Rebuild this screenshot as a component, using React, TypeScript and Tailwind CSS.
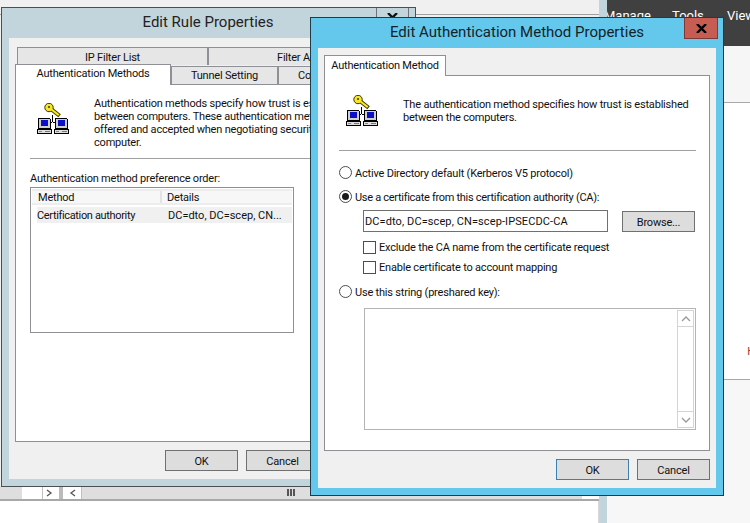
import React from 'react';

const KeyIcon: React.FC<{ className?: string }> = ({ className }) => (
  <svg className={className} width="32" height="32" viewBox="0 0 32 32">
    {/* connector */}
    <path d="M15 12h1v7h-1zM12 19h3v1h-3zM16 19h3v1h-3z" fill="#000" shapeRendering="crispEdges" />
    {/* key */}
    <path d="M14 6l7 5.5" stroke="#3a3400" strokeWidth="4" strokeLinecap="square" />
    <circle cx="12" cy="4.5" r="4.2" fill="#f7e628" stroke="#3a3400" strokeWidth="1" />
    <path d="M14 6l7 5.5" stroke="#f7e628" strokeWidth="2" strokeLinecap="square" />
    <path d="M10.5 3h2v2h-2z" fill="#6b6000" shapeRendering="crispEdges" />
    {[1, 18].map((x) => (
      <g key={x} transform={`translate(${x} 15)`} shapeRendering="crispEdges">
        <path d="M0 0h12v1h1v10h-13z" fill="#000" />
        <path d="M1 1h11v9h-11z" fill="#cfcfcf" />
        <path d="M3 2h7v6h-7z" fill="#0a10c8" />
        <path d="M-1 11h15v5h-15z" fill="#000" />
        <path d="M0 12h13v3h-13z" fill="#dedede" />
        <path d="M1 13h3v1h-3z" fill="#18c838" />
        <path d="M7 13h5v1h-5z" fill="#777" />
      </g>
    ))}
  </svg>
);

const Chevron: React.FC<{ d: string; color?: string }> = ({ d, color = '#9a9a9a' }) => (
  <svg width="10" height="8" viewBox="0 0 10 8" fill="none" stroke={color} strokeWidth="1.3">
    <path d={d} />
  </svg>
);

const Radio: React.FC<{ label: string; checked?: boolean; className?: string }> = ({ label, checked, className }) => (
  <div className={`flex items-center h-[13px] ${className ?? ''}`}>
    <span className="w-[13px] h-[13px] rounded-full border border-[#4d4d4d] bg-white flex items-center justify-center mr-[3px] shrink-0">
      {checked && <span className="w-[7px] h-[7px] rounded-full bg-[#1a1a1a]" />}
    </span>
    <span className="pt-[1px]">{label}</span>
  </div>
);

const Check: React.FC<{ label: string; className?: string }> = ({ label, className }) => (
  <div className={`flex items-center h-[13px] ml-[24px] ${className ?? ''}`}>
    <span className="w-[13px] h-[13px] border border-[#4d4d4d] bg-white mr-[3px] shrink-0" />
    <span>{label}</span>
  </div>
);

const Btn: React.FC<{ label: string; focused?: boolean }> = ({ label, focused }) => (
  <div
    className={`w-[73px] h-[21px] pt-[1px] flex items-center justify-center bg-[#dddddd] border text-[#111] ${
      focused ? 'border-[#3c7fb1]' : 'border-[#707070]'
    }`}
  >
    {label}
  </div>
);

const Tab: React.FC<{ label: string; className: string }> = ({ label, className }) => (
  <div className={`flex items-center whitespace-nowrap overflow-hidden bg-[#e6e6e6] border border-b-0 border-[#8f8f96] shrink-0 ${className}`}>
    {label}
  </div>
);

export default function App() {
  return (
    <div
      className="relative w-[750px] h-[523px] overflow-hidden bg-white text-[11px] tracking-[-0.2px] leading-[13px] text-[#111]"
      style={{ fontFamily: 'Roboto, "Noto Sans", sans-serif' }}
    >
      {/* desktop behind the dialogs */}
      <div className="flex h-full">
        <div className="w-[599px] shrink-0 flex flex-col">
          <div className="h-[14px] bg-[#f0f0f0]" />
          <div className="flex-1 border-t border-[#a0a0a0] bg-[#f0f0f0]" />
          <div className="h-[13px] flex bg-[#dedede] items-stretch">
            <div className="w-[22px]" />
            <div className="w-[20px] bg-white" />
            <div className="w-[15px] bg-white border-l border-[#c0c0c0] flex items-center justify-center">
              <Chevron d="M2 1l4 3-4 3" color="#555" />
            </div>
            <div className="w-[8px] border-x-2 border-white bg-[#bbb]" />
            <div className="w-[17px] bg-white flex items-center justify-center border-r border-[#c0c0c0]">
              <Chevron d="M7 1L3 4l4 3" color="#555" />
            </div>
            <div className="w-[218px] flex justify-end items-center pr-[5px]">
              <div className="flex gap-[1px]">
                <span className="w-[2px] h-[7px] bg-[#555]" />
                <span className="w-[2px] h-[7px] bg-[#555]" />
                <span className="w-[2px] h-[7px] bg-[#555]" />
              </div>
            </div>
            <div className="flex-1" />
            <div className="w-[17px] bg-white" />
          </div>
          <div className="h-[2px] bg-[#a8a8a8]" />
          <div className="h-[22px] bg-white border-r border-[#d8d8d8]" />
        </div>
        <div className="w-[8px] shrink-0 bg-[#c3d5dc]" />
        <div className="flex-1 min-w-0 flex flex-col">
          <div className="h-[46px] bg-[#404040] flex text-white text-[13px] tracking-normal overflow-hidden whitespace-nowrap">
            <span className="mt-[9px] -ml-[3px] w-[68px] shrink-0">Manage</span>
            <span className="mt-[9px] w-[55px] shrink-0">Tools</span>
            <span className="mt-[9px] shrink-0">View</span>
          </div>
          <div className="h-[57px] bg-[#f6f6f6] border-b border-[#a8a8a8]" />
          <div className="h-[277px] bg-white border-b border-[#a8a8a8] flex justify-end items-end pb-[21px] overflow-hidden">
            <span className="text-[#a33] -mr-[5px]">H</span>
          </div>
          <div className="flex-1 bg-[#f7f7f7]" />
        </div>
      </div>

      {/* Edit Rule Properties */}
      <div className="absolute isolate left-[1px] top-[7px] w-[415px] h-[480px] border border-[#4a4f52] bg-[#c3d5dc] flex flex-col px-[7px] pb-[7px]">
        <div className="h-[30px] flex items-center justify-center text-[15px] tracking-normal text-[#222] pb-[1px]">
          <span className="mr-[1px]">Edit Rule Properties</span>
        </div>
        <div className="absolute right-[6px] top-0 w-[33px] h-[20px] border-x border-[#6d7478] flex justify-center pt-[5px]">
          <svg width="11" height="9" viewBox="0 0 11 9" stroke="#111" strokeWidth="2.4">
            <path d="M1 0l9 9M10 0L1 9" />
          </svg>
        </div>
        <div className="flex-1 bg-[#f0f0f0] flex flex-col pl-[6px] pr-[8px]">
          <div className="flex ml-[2px] mt-[9px] h-[18px] z-0 pt-[0px]">
            <Tab label="IP Filter List" className="w-[191px] justify-center pt-[1px]" />
            <Tab label="Filter Actions" className="w-[191px] pl-[68px] pt-[1px]" />
          </div>
          <div className="flex -mt-[2px] h-[21px] items-end z-10">
            <div className="w-[156px] h-[21px] bg-white border border-b-0 border-[#8f8f96] flex items-center justify-center shrink-0 relative z-10 -mb-[1px] pb-[3px]">
              Authentication Methods
            </div>
            <Tab label="Tunnel Setting" className="w-[107px] h-[18px] justify-center" />
            <Tab label="Connection Type" className="w-[107px] h-[18px] pl-[19px]" />
          </div>
          <div className="flex-1 bg-white border border-[#8f8f96] flex flex-col px-[14px]">
            <div className="h-[73px] flex items-start">
              <KeyIcon className="ml-[7px] mt-[18px] shrink-0" />
              <p className="ml-[25px] mt-[12px] w-[300px] whitespace-nowrap">
                Authentication methods specify how trust is established
                <br />
                between computers. These authentication methods are
                <br />
                offered and accepted when negotiating security with another
                <br />
                computer.
              </p>
            </div>
            <div className="h-px bg-[#a0a0a0]" />
            <div className="mt-[13px]">Authentication method preference order:</div>
            <div className="mt-[2px] w-[264px] h-[146px] border border-[#8f8f96] bg-white pt-[1px] px-[1px]">
              <div className="flex h-[16px] bg-[#f7f7f7] border-y-2 border-[#ededed]">
                <div className="w-[130px] pl-[6px] pt-[1px] border-r-2 border-[#e3e3e3] flex items-center">Method</div>
                <div className="flex-1 pl-[5px] pt-[1px] flex items-center">Details</div>
              </div>
              <div className="flex h-[16px] mt-[2px] ml-[5px] bg-[#f0f0f0] items-center">
                <div className="w-[126px] whitespace-nowrap tracking-[-0.35px]">Certification authority</div>
                <div className="pl-[5px] whitespace-nowrap tracking-normal">DC=dto, DC=scep, CN...</div>
              </div>
            </div>
          </div>
          <div className="h-[37px] flex pl-[150px] gap-[8px] pt-[8px] shrink-0">
            <Btn label="OK" />
            <Btn label="Cancel" />
          </div>
        </div>
      </div>

      {/* Edit Authentication Method Properties */}
      <div className="absolute isolate left-[310px] top-[17px] w-[414px] h-[479px] border border-[#1d3c4a] bg-[#63c8eb] flex flex-col px-[7px] pb-[7px]">
        <div className="h-[30px] flex items-center justify-center text-[15px] tracking-normal text-[#14232b] pb-[1px]">
          <span>Edit Authentication Method Properties</span>
        </div>
        <div className="absolute right-[5px] top-0 w-[34px] h-[21px] bg-[#c75c53] border border-t-0 border-[#7d3a35] flex items-center justify-center">
          <svg width="11" height="9" viewBox="0 0 11 9" stroke="#000" strokeWidth="2.4">
            <path d="M1 0l9 9M10 0L1 9" />
          </svg>
        </div>
        <div className="flex-1 bg-[#f0f0f0] flex flex-col px-[6px]">
          <div className="flex mt-[7px] h-[21px] relative z-10 -mb-[1px]">
            <div className="w-[122px] h-[21px] pb-[2px] bg-white border border-b-0 border-[#8f8f96] flex items-center justify-center whitespace-nowrap">
              Authentication Method
            </div>
          </div>
          <div className="flex-1 bg-white border border-[#8f8f96] flex flex-col pl-[14px] pr-[13px]">
            <div className="h-[74px] flex items-start">
              <KeyIcon className="ml-[7px] mt-[19px] shrink-0" />
              <p className="ml-[25px] mt-[22px] whitespace-nowrap">
                The authentication method specifies how trust is established
                <br />
                between the computers.
              </p>
            </div>
            <div className="h-px bg-[#a0a0a0]" />
            <Radio label="Active Directory default (Kerberos V5 protocol)" className="mt-[15px]" />
            <Radio
              label="Use a certificate from this certification authority (CA):"
              checked
              className="mt-[11px] tracking-[-0.3px]"
            />
            <div className="flex ml-[24px] mt-[7px] items-start">
              <div className="w-[245px] h-[22px] border border-[#707070] bg-white flex items-center pl-[1px] whitespace-nowrap tracking-[0.1px]">
                DC=dto, DC=scep, CN=scep-IPSECDC-CA
              </div>
              <div className="ml-[14px] mt-[1px]">
                <Btn label="Browse..." />
              </div>
            </div>
            <Check label="Exclude the CA name from the certificate request" className="mt-[9px]" />
            <Check label="Enable certificate to account mapping" className="mt-[7px]" />
            <Radio label="Use this string (preshared key):" className="mt-[11px]" />
            <div className="ml-[25px] mt-[10px] w-[332px] h-[122px] border border-[#b4b4b4] bg-white flex justify-end p-[1px]">
              <div className="w-[17px] border border-[#d4d4d4] flex flex-col justify-between">
                <div className="h-[16px] border-b border-[#d4d4d4] flex items-center justify-center">
                  <Chevron d="M1 6l4-4 4 4" />
                </div>
                <div className="h-[16px] border-t border-[#d4d4d4] flex items-center justify-center">
                  <Chevron d="M1 2l4 4 4-4" />
                </div>
              </div>
            </div>
          </div>
          <div className="h-[37px] flex justify-end gap-[8px] pt-[8px] shrink-0">
            <Btn label="OK" focused />
            <Btn label="Cancel" />
          </div>
        </div>
      </div>
    </div>
  );
}
